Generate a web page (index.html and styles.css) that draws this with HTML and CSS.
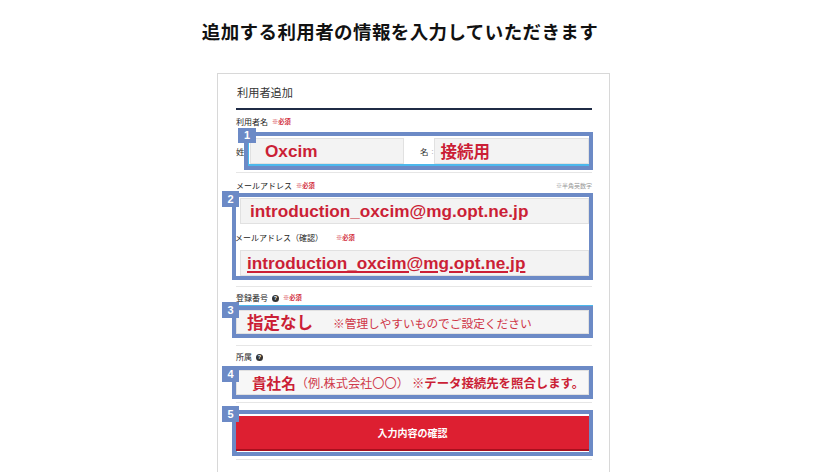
FILE: index.html
```html
<!DOCTYPE html>
<html lang="ja">
<head>
<meta charset="utf-8">
<title>利用者追加</title>
<link rel="stylesheet" href="styles.css">
</head>
<body>
<h1 class="heading">追加する利用者の情報を入力していただきます</h1>
<div class="card">
  <div class="card-title">利用者追加</div>

  <div class="label">利用者名<span class="req">※必須</span></div>
  <div class="name-row">
    <span class="sub">姓</span>
    <div class="frame f1">
      <span class="badge b1">1</span>
      <div class="field w-sei"><span class="val">Oxcim</span></div>
      <span class="sub mei">名</span><span class="colon">:</span>
      <div class="field grow"><span class="val jp">接続用</span></div>
    </div>
  </div>
  <div class="divider d1"></div>

  <div class="label-row">
    <span class="label-text">メールアドレス<span class="req">※必須</span></span>
    <span class="note">※半角英数字</span>
  </div>
  <div class="frame f2">
    <span class="badge b2">2</span>
    <div class="field fa"><span class="val">introduction_oxcim@mg.opt.ne.jp</span></div>
    <div class="inner-label">メールアドレス（確認）<span class="req wide">※必須</span></div>
    <div class="field fb"><span class="val link">introduction_oxcim@mg.opt.ne.jp</span></div>
  </div>
  <div class="divider d2"></div>

  <div class="label l3">登録番号<span class="qmark">?</span><span class="req">※必須</span></div>
  <div class="frame f3">
    <span class="badge b3">3</span>
    <div class="field full pad3"><span class="val jp">指定なし</span><span class="hint">※管理しやすいものでご設定ください</span></div>
  </div>
  <div class="divider d3"></div>

  <div class="label l4">所属<span class="qmark">?</span></div>
  <div class="frame f4">
    <span class="badge b4">4</span>
    <div class="field full pad4"><span class="val jp small">貴社名</span><span class="paren">（例.株式会社〇〇）</span><span class="strong-note">※データ接続先を照合します。</span></div>
  </div>
  <div class="divider d4"></div>

  <div class="frame f5">
    <span class="badge b5">5</span>
    <button class="submit" type="button">入力内容の確認</button>
  </div>
  <div class="divider d5"></div>
</div>
</body>
</html>
```
FILE: styles.css
```css
html, body {
  margin: 0;
  padding: 0;
  background: #ffffff;
}

body {
  font-family: "Noto Sans CJK JP", "Noto Sans", sans-serif;
  color: #333333;
  overflow: hidden;
}

.heading {
  margin: 0;
  padding-top: 18px;
  width: 800px;
  text-align: center;
  font-size: 18.5px;
  line-height: 26px;
  font-weight: 700;
  letter-spacing: 0.4px;
  color: #111111;
}

.card {
  margin: 29px 0 0 217px;
  width: 356px;
  padding: 0 17px 60px 18px;
  border: 1px solid #d8d8d8;
}

.card-title {
  padding: 10px 0 8px 1px;
  font-size: 11.2px;
  line-height: 16px;
  color: #333333;
  border-bottom: 2px solid #1f2b45;
}

.label {
  margin-top: 6px;
  font-size: 8px;
  line-height: 12px;
  color: #222222;
  display: flex;
  align-items: center;
}

.label-text {
  display: flex;
  align-items: center;
}

.req {
  color: #d23040;
  font-size: 6.3px;
  font-weight: 700;
  margin-left: 4px;
}

.req.wide {
  margin-left: 13px;
}

.qmark {
  display: inline-block;
  width: 7px;
  height: 7px;
  border-radius: 50%;
  background: #333333;
  color: #ffffff;
  font-family: "Liberation Sans", sans-serif;
  font-size: 5.5px;
  font-weight: 700;
  line-height: 7px;
  text-align: center;
  margin-left: 4px;
}

.name-row {
  display: flex;
  align-items: center;
  margin-top: 4px;
}

.sub {
  flex: none;
  width: 8px;
  font-size: 8.5px;
  color: #333333;
}

.mei {
  width: auto;
  margin-left: 16px;
}

.colon {
  font-size: 7px;
  color: #aaaaaa;
  margin-left: 3px;
  margin-right: 1px;
}

.frame {
  position: relative;
  border: 4px solid #6c8ac6;
}

.f1 {
  flex: 1;
  margin-right: -1px;
  height: 30px;
  display: flex;
  align-items: center;
  box-shadow: inset 1px -2px 0 #4cb8ec;
}

.field {
  box-sizing: border-box;
  background: #f3f3f3;
  border: 1px solid #e1e1e1;
  height: 26px;
  display: flex;
  align-items: center;
  white-space: nowrap;
}

.w-sei {
  width: 154px;
  margin-left: 2px;
  padding-left: 14px;
}

.grow {
  flex: 1;
  padding-left: 5px;
  margin-right: 0;
}

.val {
  color: #cb1f36;
  font-family: "Liberation Sans", sans-serif;
  font-size: 17.2px;
  font-weight: 700;
}

.val.jp {
  font-family: "Noto Sans CJK JP", sans-serif;
  font-size: 16.5px;
}

.val.small {
  font-size: 14.6px;
}

.val.link {
  text-decoration: underline;
  text-decoration-thickness: 1.5px;
  text-underline-offset: 2px;
}

.divider {
  border-top: 1px solid #e6e6e6;
}

.d1 { margin-top: 2px; }
.d2 { margin-top: 6px; }
.d3 { margin-top: 7px; }
.d4 { margin-top: 3px; }
.d5 { margin-top: 3px; }

.label-row {
  display: flex;
  justify-content: space-between;
  align-items: center;
  margin-top: 7px;
  font-size: 8px;
  line-height: 12px;
  color: #222222;
}

.note {
  font-size: 6px;
  color: #9a9a9a;
}

.f2 {
  margin: 1px -1px 0 -4px;
}

.fa {
  margin: 1px 0 0 4px;
  padding-left: 9px;
}

.inner-label {
  margin-left: -1px;
  padding: 8px 0 6px;
  font-size: 8px;
  line-height: 12px;
  color: #222222;
  display: flex;
  align-items: center;
}

.fb {
  margin-left: 4px;
  padding-left: 6px;
}

.l3, .l4 {
  margin-top: 5px;
}

.f3 {
  margin: 2px -1px 0 -4px;
  height: 24px;
  box-shadow: 0 -1px 0 #4cb8ec;
}

.full {
  height: 100%;
  background: #f5f5f5;
}

.pad3 {
  padding-left: 10px;
}

.hint {
  margin-left: 20px;
  font-size: 11.7px;
  color: #cf3345;
}

.f4 {
  margin: 3px -1px 0 -4px;
  height: 25px;
  box-shadow: inset 0 -2px 0 #4cb8ec;
}

.pad4 {
  padding-left: 15px;
  background: #f7f7f7;
}

.paren {
  font-size: 12.2px;
  color: #d03a4b;
}

.strong-note {
  margin-left: 3px;
  font-size: 12.4px;
  font-weight: 700;
  color: #cb1f36;
}

.f5 {
  margin: 7px -1px 0 -4px;
  height: 38px;
  box-shadow: inset 1px 0 0 #4cb8ec;
}

.submit {
  display: block;
  box-sizing: border-box;
  width: 100%;
  height: 35px;
  margin-top: 2px;
  padding: 0;
  border: 0;
  border-bottom: 2px solid #a8101e;
  background: #dd1f31;
  color: #ffffff;
  font-family: "Noto Sans CJK JP", sans-serif;
  font-size: 10px;
  font-weight: 700;
  text-align: center;
}

.badge {
  position: absolute;
  left: -14px;
  width: 17px;
  height: 16px;
  background: #6c8ac6;
  color: #ffffff;
  font-family: "Liberation Sans", sans-serif;
  font-size: 11px;
  font-weight: 700;
  line-height: 16px;
  text-align: center;
  z-index: 2;
}

.b1 { left: -10px; top: -8px; width: 18px; height: 15px; line-height: 15px; }
.b2 { top: -6px; }
.b3 { top: -8px; }
.b4 { top: -4px; }
.b5 { top: -8px; }
```
